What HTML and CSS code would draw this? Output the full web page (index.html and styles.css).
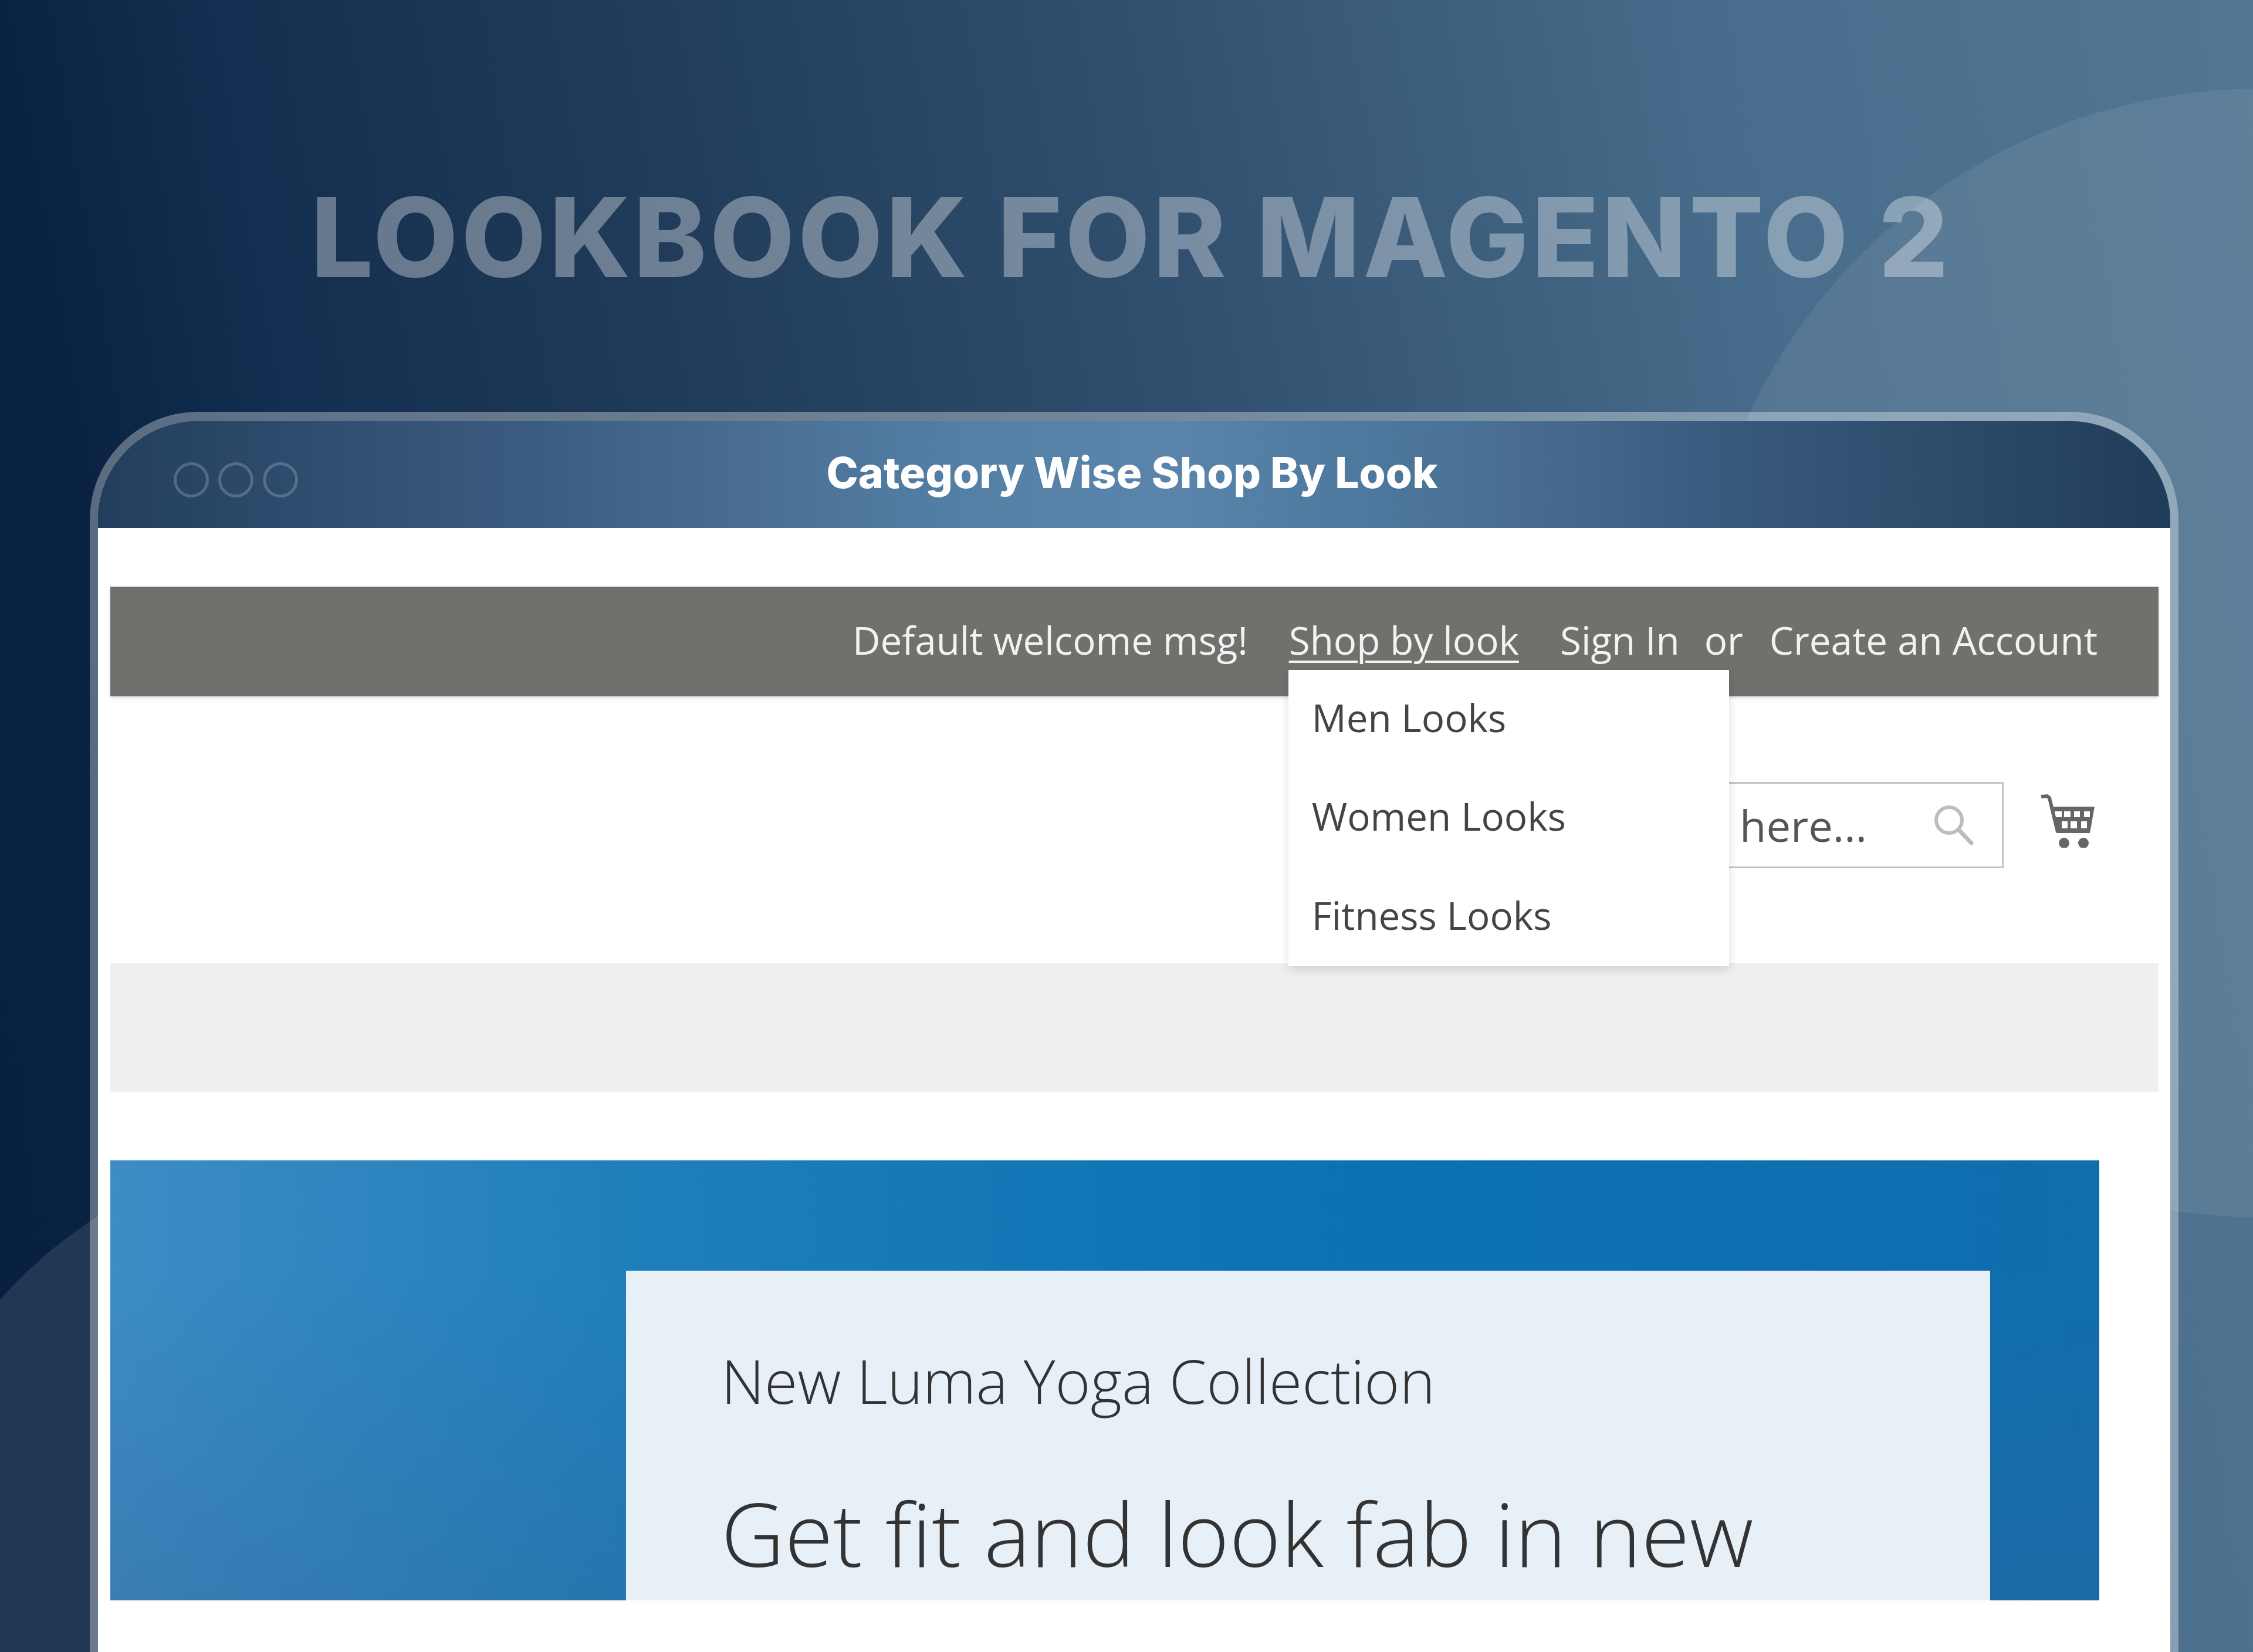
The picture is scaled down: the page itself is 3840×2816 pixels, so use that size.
FILE: index.html
```html
<!DOCTYPE html>
<html lang="en">
<head>
<meta charset="utf-8">
<title>Lookbook for Magento 2</title>
<link rel="stylesheet" href="styles.css">
</head>
<body>
<div class="page">
<div class="deco deco-right"></div>
<div class="deco deco-left"></div>
<h1 class="hero-title">LOOKBOOK FOR MAGENTO 2</h1>
<main class="window">
  <header class="window-bar">
    <div class="dots"><span class="dot"></span><span class="dot"></span><span class="dot"></span></div>
    <h2 class="window-title">Category Wise Shop By Look</h2>
  </header>
  <div class="store">
    <div class="top-bar">
      <span>Default welcome msg!</span>
      <div class="shop-look">
        <a class="shop-link" href="#">Shop by look</a>
        <ul class="menu">
          <li>Men Looks</li>
          <li>Women Looks</li>
          <li>Fitness Looks</li>
        </ul>
      </div>
      <div class="account">
        <span>Sign In</span><span>or</span><span class="create">Create an Account</span>
      </div>
    </div>
    <div class="store-header">
      <div class="search">
        <span class="search-text">here...</span>
        <svg class="search-icon" viewBox="0 0 70 70" width="70" height="70"><circle cx="26" cy="26" r="22" fill="none" stroke="#bdbdbd" stroke-width="6"/><path d="M42 42L64 65" stroke="#bdbdbd" stroke-width="7" stroke-linecap="round"/></svg>
      </div>
      <svg class="cart" viewBox="0 0 93 93" width="93" height="93">
        <path d="M2 6L12 5L16 8L30 66" fill="none" stroke="#666" stroke-width="6"/>
        <path fill="#666" fill-rule="evenodd" d="M17 23H93L85 68H28ZM25 31V41H37V31ZM41 31V41H52V31ZM58 31V41H68V31ZM75 31V41H85V31ZM37 48V60H47V48ZM52 48V60H63V48ZM70 48V60H80V48Z"/>
        <circle cx="41" cy="85" r="9" fill="#666"/><circle cx="74" cy="85" r="9" fill="#666"/>
      </svg>
    </div>
    <div class="nav-strip"></div>
    <section class="banner">
      <div class="banner-panel">
        <p class="banner-kicker">New Luma Yoga Collection</p>
        <p class="banner-headline">Get fit and look fab in new</p>
      </div>
    </section>
  </div>
</main>
</div>
</body>
</html>
```
FILE: styles.css
```css
* { box-sizing: border-box; }
html, body { margin: 0; padding: 0; }
.page {
  width: 3840px;
  height: 2816px;
  position: relative;
  overflow: hidden;
  display: flex;
  flex-direction: column;
  background: linear-gradient(80deg, #07203f 0%, #0a2342 11.5%, #132e50 19.7%, #1c3655 29.7%, #2d4b6a 52%, #486c8b 78.3%, #527693 100%);
  font-family: "Open Sans", sans-serif;
}
.deco { position: absolute; border-radius: 50%; }
.deco-right { left: 2891px; top: 151px; width: 1924px; height: 1924px; background: rgba(255,255,255,.08); }
.deco-left { left: -202px; top: 1947px; width: 1600px; height: 1600px; background: rgba(255,255,255,.1); }

.hero-title {
  position: relative;
  margin: 0;
  height: 702px;
  flex: none;
  padding-top: 288px;
  padding-left: 530px;
  font-family: Inter, sans-serif;
  font-weight: 800;
  font-size: 187px;
  line-height: 232px;
  letter-spacing: 5.6px;
  white-space: nowrap;
  color: rgba(255,255,255,.35);
}

.window {
  position: relative;
  margin-left: 153px;
  width: 3560px;
  flex: 1;
  border: solid rgba(255,255,255,.33);
  border-width: 16px 14px 0;
  border-radius: 184px 184px 0 0;
  background-clip: padding-box;
  display: flex;
  flex-direction: column;
}
.window-bar {
  height: 182px;
  flex: none;
  border-radius: 170px 170px 0 0;
  display: grid;
  grid-template-columns: 1fr auto 1fr;
  align-items: center;
  padding-left: 129px;
  background: linear-gradient(90deg, #233e5d 0%, #3b5c81 21%, #4a6f93 32%, #5480a6 42%, #5a84ab 52%, #4f7aa0 60%, #486c90 69%, #3a5c80 77%, #2a4866 92%, #213b5a 100%);
}
.dots { display: flex; gap: 16px; margin-top: 18px; }
.dot { width: 60px; height: 60px; border: 5px solid rgba(255,255,255,.2); border-radius: 50%; }
.window-title {
  margin: 0 0 6px -136px;
  font-family: Inter, sans-serif;
  font-weight: 800;
  font-size: 73px;
  line-height: 90px;
  letter-spacing: .1px;
  color: #fff;
  white-space: nowrap;
}

.store {
  flex: 1;
  background: #fff;
  padding: 100px 20px 0 21px;
  display: flex;
  flex-direction: column;
}
.top-bar {
  height: 187px;
  flex: none;
  background: #6f716d;
  box-shadow: 0 3px 5px rgba(0,0,0,.12);
  display: flex;
  justify-content: flex-end;
  align-items: center;
  gap: 70px;
  padding: 0 104px 6px 0;
  font-size: 65.5px;
  line-height: 90px;
  color: #f2f2f2;
  white-space: nowrap;
}
.shop-look { position: relative; }
.shop-link { color: inherit; text-decoration: underline; text-decoration-thickness: 4px; text-underline-offset: 10px; }
.account { display: flex; gap: 42px; }
.create { margin-left: 3px; }
.menu {
  position: absolute;
  z-index: 2;
  left: -1px;
  top: 96px;
  width: 751px;
  height: 505px;
  margin: 0;
  padding: 0;
  list-style: none;
  background: #fff;
  box-shadow: 0 6px 16px rgba(0,0,0,.13);
  color: #444;
  font-size: 65.5px;
}
.menu li { height: 168.5px; line-height: 162px; padding-left: 40px; }

.store-header {
  height: 455px;
  flex: none;
  display: flex;
  justify-content: flex-end;
  padding: 146px 109px 0 0;
}
.search {
  width: 513px;
  height: 147px;
  border: 3px solid #c4c4c4;
  display: flex;
  align-items: center;
  justify-content: space-between;
  padding: 0 46px 0 60px;
  color: #555;
  font-size: 74px;
}
.search-icon { flex: none; }
.cart { margin: 19px 0 0 62px; flex: none; }

.nav-strip { height: 219px; flex: none; background: #efefef; }

.banner {
  margin-top: 117px;
  width: 3390px;
  height: 750px;
  flex: none;
  padding: 188px 0 0 879px;
  overflow: hidden;
  background:
    linear-gradient(180deg, rgba(50,100,150,0) 25%, rgba(50,100,150,.35) 100%),
    linear-gradient(90deg, #3d8cc4 0%, #1f7fbb 26%, #0b72b4 60%, #106dae 100%);
}
.banner-panel {
  width: 2325px;
  height: 562px;
  padding: 0 0 0 162px;
  background: #e8f0f7;
  color: #333;
  font-weight: 300;
  white-space: nowrap;
}
.banner-kicker { margin: 0; padding-top: 117px; font-size: 102.5px; line-height: 140px; }
.banner-headline { margin: 0; padding-top: 95px; font-size: 150px; line-height: 190px; }
```
